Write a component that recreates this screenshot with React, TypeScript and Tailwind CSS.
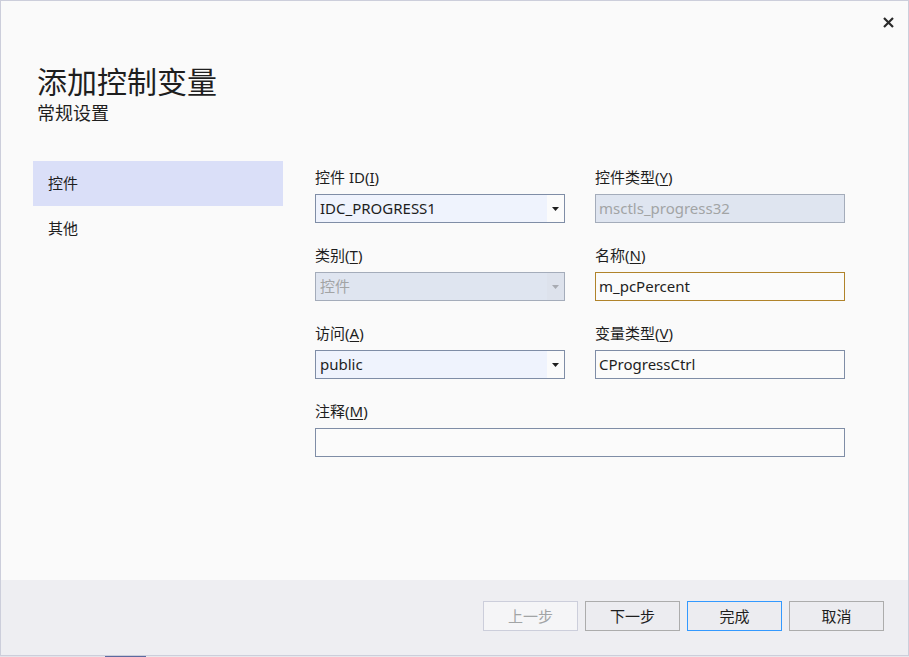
import React from "react";

const font = { fontFamily: '"Noto Sans", "Noto Sans CJK SC", sans-serif' };

function Label({ text, k }: { text: string; k: string }) {
  return (
    <div className="h-[20px] leading-[19px] text-[15px] text-[#1e1e1e] mb-[6px] whitespace-nowrap">
      {text}(<span className="underline underline-offset-[2px]">{k}</span>)
    </div>
  );
}

function Arrow({ color }: { color: string }) {
  return (
    <svg width="7" height="4" viewBox="0 0 7 4">
      <path d="M0 0 H7 L3.5 4 Z" fill={color} />
    </svg>
  );
}

function Combo({ value, disabled }: { value: string; disabled?: boolean }) {
  return (
    <div
      className={
        "h-[29px] w-[250px] flex border " +
        (disabled ? "border-[#a4acba] bg-[#dfe5f0]" : "border-[#7f8da6] bg-[#eff3fd]")
      }
    >
      <div
        className={
          "flex-1 pl-[4px] leading-[27px] text-[15px] " +
          (disabled ? "text-[#a2a4a5]" : "text-[#1e1e1e]")
        }
      >
        {value}
      </div>
      <div
        className={
          "w-[17px] flex items-center justify-center " +
          (disabled ? "bg-[#dde2ec]" : "bg-[#fbfbfb]")
        }
      >
        <Arrow color={disabled ? "#a8abb2" : "#1e1e1e"} />
      </div>
    </div>
  );
}

function TextBox({
  value,
  disabled,
  focused,
  wide,
}: {
  value: string;
  disabled?: boolean;
  focused?: boolean;
  wide?: boolean;
}) {
  return (
    <div
      className={
        "h-[29px] border pl-[3px] leading-[27px] text-[15px] " +
        (wide ? "w-[530px] " : "w-[250px] ") +
        (disabled
          ? "border-[#a4acba] bg-[#dfe5f0] text-[#a2a4a5]"
          : focused
          ? "border-[#b0832a] bg-[#fbfbfb] text-[#1e1e1e]"
          : "border-[#7f8da6] bg-[#fbfbfb] text-[#1e1e1e]")
      }
    >
      {value}
    </div>
  );
}

function Button({
  text,
  disabled,
  primary,
}: {
  text: string;
  disabled?: boolean;
  primary?: boolean;
}) {
  return (
    <div
      className={
        "w-[95px] h-[30px] border flex items-center justify-center text-[15px] " +
        (disabled
          ? "border-[#cccedb] bg-[#f5f5f7] text-[#a2a4a5]"
          : primary
          ? "border-[#3399ff] bg-[#ececf0] text-[#1e1e1e]"
          : "border-[#acacac] bg-[#ececf0] text-[#1e1e1e]")
      }
    >
      {text}
    </div>
  );
}

export default function App() {
  return (
    <div className="w-[909px] h-[657px] overflow-hidden bg-[#f0f0f0] flex flex-col" style={font}>
      <div className="w-[909px] h-[656px] border border-[#cccedb] bg-[#fafafa] flex flex-col">
        {/* top bar */}
        <div className="h-[40px] flex justify-end items-start pt-[16px] pr-[14px]">
          <svg width="11" height="11" viewBox="0 0 11 11">
            <path d="M1 1 L10 10 M10 1 L1 10" stroke="#2a2a2a" strokeWidth="2.2" />
          </svg>
        </div>
        {/* header */}
        <div className="pl-[36px] pt-[21px]">
          <div className="text-[30px] leading-[40px] text-[#1e1e1e]">添加控制变量</div>
          <div className="text-[18px] leading-[24px] text-[#1e1e1e] -mt-[1px]">常规设置</div>
        </div>
        {/* body */}
        <div className="flex-1 flex pt-[36px] pl-[32px]">
          <div className="w-[250px] flex flex-col">
            <div className="h-[45px] bg-[#dadff8] pl-[15px] flex items-center text-[15px] text-[#1e1e1e]">
              控件
            </div>
            <div className="h-[45px] pl-[15px] flex items-center text-[15px] text-[#1e1e1e]">
              其他
            </div>
          </div>
          <div className="ml-[32px] pt-[7px] grid grid-cols-[250px_250px] gap-x-[30px] gap-y-[23px] content-start">
            <div>
              <Label text="控件 ID" k="I" />
              <Combo value="IDC_PROGRESS1" />
            </div>
            <div>
              <Label text="控件类型" k="Y" />
              <TextBox value="msctls_progress32" disabled />
            </div>
            <div>
              <Label text="类别" k="T" />
              <Combo value="控件" disabled />
            </div>
            <div>
              <Label text="名称" k="N" />
              <TextBox value="m_pcPercent" focused />
            </div>
            <div>
              <Label text="访问" k="A" />
              <Combo value="public" />
            </div>
            <div>
              <Label text="变量类型" k="V" />
              <TextBox value="CProgressCtrl" />
            </div>
            <div className="col-span-2">
              <Label text="注释" k="M" />
              <TextBox value="" wide />
            </div>
          </div>
        </div>
        {/* footer */}
        <div className="h-[75px] bg-[#eeeef2] flex justify-end items-start pt-[21px] pr-[24px] gap-[7px]">
          <Button text="上一步" disabled />
          <Button text="下一步" />
          <Button text="完成" primary />
          <Button text="取消" />
        </div>
      </div>
      <div className="h-[1px] flex">
        <div className="w-[105px] bg-[#e4e4ea]" />
        <div className="w-[41px] bg-[#5b6aa0]" />
        <div className="flex-1 bg-[#e8e8ec]" />
      </div>
    </div>
  );
}
